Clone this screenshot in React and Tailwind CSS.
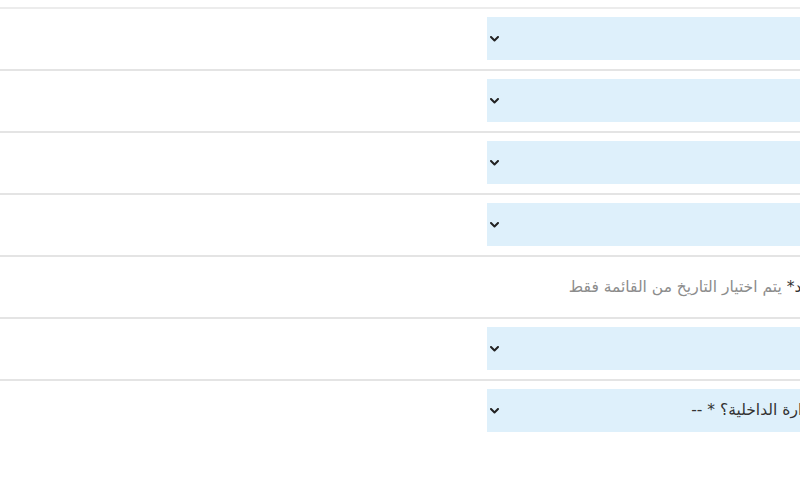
import React from "react";

function Chevron() {
  return (
    <svg width="9" height="6" viewBox="0 0 9 6" className="shrink-0">
      <path d="M1 1 L4.5 4.5 L8 1" fill="none" stroke="#222" strokeWidth="2" strokeLinecap="round" strokeLinejoin="round" />
    </svg>
  );
}

function SelectRow({ text }) {
  return (
    <div className="flex border-b-2 border-[#e4e4e4] pl-[487px] pt-[8px] pb-[9px]">
      <div className="flex h-[43px] flex-1 items-center justify-between bg-[#def0fb] pl-[3px] pr-[40px]">
        <Chevron />
        <span dir="rtl" className="whitespace-nowrap text-[15.5px] text-[#333]">{text}</span>
      </div>
    </div>
  );
}

export default function App() {
  return (
    <div className="h-[500px] w-[800px] overflow-hidden bg-white" style={{ fontFamily: '"DejaVu Sans", "Noto Sans", sans-serif' }}>
      <div className="w-[1100px]">
        <div className="h-[9px] border-b-2 border-[#ececec]" />
        <SelectRow text="" />
        <SelectRow text="" />
        <SelectRow text="" />
        <SelectRow text="" />
        <div className="flex h-[62px] items-center justify-end border-b-2 border-[#e4e4e4] pr-[231px] pt-[2px]">
          <span dir="rtl" className="whitespace-nowrap text-[15.5px]">
            <span className="text-[#333]">تاريخ الميلاد*</span>{" "}
            <span className="text-[#8c8c8c]">يتم اختيار التاريخ من القائمة فقط</span>
          </span>
        </div>
        <SelectRow text="" />
        <div className="flex pl-[487px] pt-[8px] pb-[9px]">
          <div className="flex h-[43px] flex-1 items-center justify-between bg-[#def0fb] pl-[3px] pr-[157px]">
            <Chevron />
            <span dir="rtl" className="whitespace-nowrap text-[15.5px] text-[#333]">-- هل تمت مراجعة وزارة الداخلية؟ * --</span>
          </div>
        </div>
      </div>
    </div>
  );
}
